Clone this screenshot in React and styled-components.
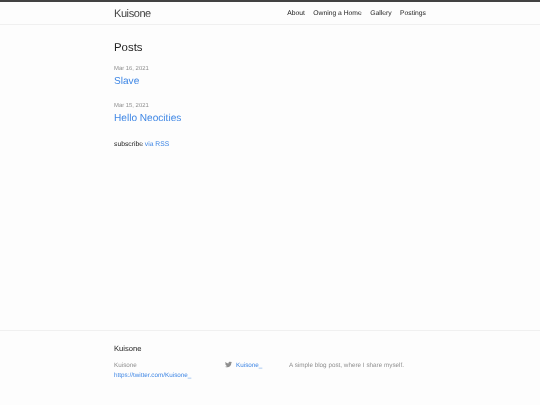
import React from "react";
import styled, { createGlobalStyle } from "styled-components";
import { FaTwitter } from "react-icons/fa";

const GlobalStyle = createGlobalStyle`
  html, body {
    margin: 0;
    padding: 0;
    background: #fdfdfd;
    color: #222;
    font-family: "Liberation Sans", Arial, sans-serif;
    text-rendering: geometricPrecision;
  }
  a {
    color: #3f87e5;
    text-decoration: none;
  }
`;

const Page = styled.div`
  width: 540px;
  height: 405px;
  display: flex;
  flex-direction: column;
  overflow: hidden;
  filter: blur(0.3px);
`;

const Wrapper = styled.div`
  width: 312px;
  margin: 0 auto;
`;

const Header = styled.header`
  height: 22px;
  border-top: 2.5px solid #424242;
  border-bottom: 1px solid #f0f0f0;
`;

const HeaderRow = styled(Wrapper)`
  height: 22px;
  padding-top: 1px;
  box-sizing: border-box;
  display: flex;
  align-items: center;
  justify-content: space-between;
`;

const SiteTitle = styled.a`
  font-size: 11px;
  color: #424242;
  letter-spacing: -0.42px;
`;

const Nav = styled.nav`
  display: flex;
  gap: 8.5px;
`;

const NavLink = styled.a`
  font-size: 6.75px;
  color: #222;
`;

const Main = styled.main`
  flex: 1;
  padding-top: 15.5px;
`;

const Heading = styled.h1`
  margin: 0 0 10px;
  font-size: 11.4px;
  line-height: 14px;
  font-weight: 400;
`;

const Post = styled.article`
  margin-bottom: 13.5px;
`;

const PostDate = styled.div`
  font-size: 5.9px;
  line-height: 9px;
  color: #8f8f8f;
`;

const PostLink = styled.a`
  display: block;
  font-size: 10.1px;
  line-height: 15px;
`;

const Subscribe = styled.p`
  margin: 0;
  font-size: 6.75px;
  line-height: 9px;
`;

const Footer = styled.footer`
  height: 75px;
  border-top: 1px solid #f0f0f0;
  padding-top: 13px;
  box-sizing: border-box;
`;

const FooterTitle = styled.h2`
  margin: 0 0 7px;
  font-size: 7.6px;
  line-height: 10px;
  font-weight: 400;
`;

const FooterColumns = styled.div`
  display: flex;
  font-size: 6.33px;
  line-height: 10px;
  color: #8f8f8f;
`;

const ContactCol = styled.div`
  width: 111px;
  display: flex;
  flex-direction: column;
`;

const SocialCol = styled.div`
  width: 64px;
  display: flex;
  align-items: flex-start;
  gap: 4px;
`;

const TwitterIcon = styled(FaTwitter)`
  width: 7px;
  height: 7px;
  color: #8f8f8f;
`;

const About = styled.div`
  flex: 1;
`;

export default function App() {
  return (
    <Page>
      <GlobalStyle />
      <Header>
        <HeaderRow>
          <SiteTitle href="#">Kuisone</SiteTitle>
          <Nav>
            <NavLink href="#">About</NavLink>
            <NavLink href="#">Owning a Home</NavLink>
            <NavLink href="#">Gallery</NavLink>
            <NavLink href="#">Postings</NavLink>
          </Nav>
        </HeaderRow>
      </Header>
      <Main>
        <Wrapper>
          <Heading>Posts</Heading>
          <Post>
            <PostDate>Mar 16, 2021</PostDate>
            <PostLink href="#">Slave</PostLink>
          </Post>
          <Post>
            <PostDate>Mar 15, 2021</PostDate>
            <PostLink href="#">Hello Neocities</PostLink>
          </Post>
          <Subscribe>
            subscribe <a href="#">via RSS</a>
          </Subscribe>
        </Wrapper>
      </Main>
      <Footer>
        <Wrapper>
          <FooterTitle>Kuisone</FooterTitle>
          <FooterColumns>
            <ContactCol>
              <span>Kuisone</span>
              <a href="#">https://twitter.com/Kuisone_</a>
            </ContactCol>
            <SocialCol>
              <TwitterIcon />
              <a href="#">Kuisone_</a>
            </SocialCol>
            <About>A simple blog post, where I share myself.</About>
          </FooterColumns>
        </Wrapper>
      </Footer>
    </Page>
  );
}
